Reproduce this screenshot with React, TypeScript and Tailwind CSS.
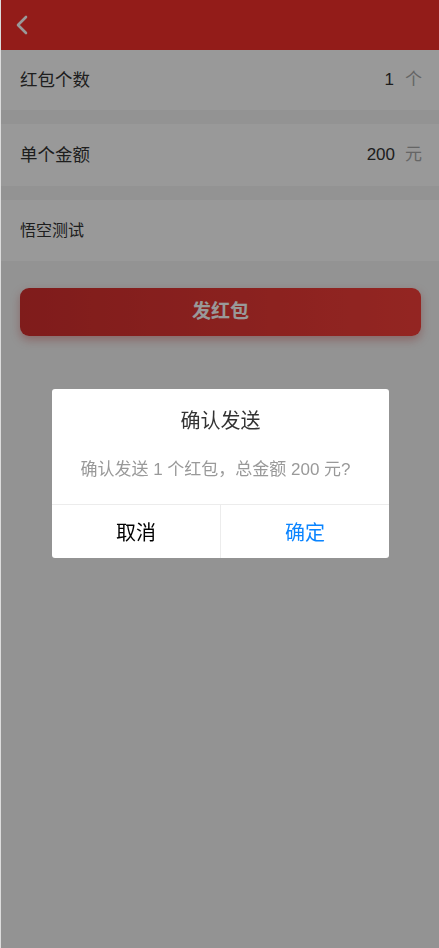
import React from "react";

export default function App() {
  return (
    <div
      className="relative min-h-[948px] w-full bg-[#f5f5f5] border-l border-[#dcdcdc]"
      style={{ fontFamily: '"Liberation Sans", "Noto Sans CJK SC", sans-serif' }}
    >
      <div className="h-[50px] bg-[#f52f2b] flex items-center pl-[14px]">
        <svg width="14" height="20" viewBox="0 0 14 20" fill="none">
          <path d="M11 2 L3 10 L11 18" stroke="#ffffff" strokeWidth="2.6" strokeLinecap="round" strokeLinejoin="round" />
        </svg>
      </div>

      <div className="h-[60px] bg-white flex items-center justify-between pl-[19px] pr-[17px]">
        <span className="text-[17.5px] text-[#333]">红包个数</span>
        <div className="flex items-center">
          <span className="text-[17px] text-[#333]">1</span>
          <span className="text-[17px] text-[#a8a8a8] ml-[11px]">个</span>
        </div>
      </div>

      <div className="h-[14px]" />

      <div className="h-[62px] bg-white flex items-center justify-between pl-[19px] pr-[17px]">
        <span className="text-[17.5px] text-[#333]">单个金额</span>
        <div className="flex items-center">
          <span className="text-[17px] text-[#333]">200</span>
          <span className="text-[17px] text-[#a8a8a8] ml-[10px]">元</span>
        </div>
      </div>

      <div className="h-[14px]" />

      <div className="h-[61px] bg-white flex items-center pl-[19px]">
        <span className="text-[16px] text-[#333]">悟空测试</span>
      </div>

      <div className="pl-[19px] pr-[18px] pt-[27px]">
        <button className="w-full h-[48px] rounded-[9px] bg-gradient-to-r from-[#d42f2e] to-[#f63f39] text-white text-[19px] font-bold shadow-[0_4px_10px_rgba(200,40,40,0.35)]">
          发红包
        </button>
      </div>

      <div className="fixed top-0 bottom-0 right-0 left-[1px] bg-black/40" />

      <div className="absolute left-[51px] top-[389px] w-[337px] bg-white rounded-[3px] overflow-hidden">
        <div className="pt-[18px] text-center text-[20px] text-[#333] leading-[28px]">确认发送</div>
        <div className="pt-[23px] pb-[22px] pr-[10px] text-center text-[17px] text-[#999] leading-[24px]">
          确认发送 1 个红包，总金额 200 元?
        </div>
        <div className="flex h-[54px] border-t border-[#ececec]">
          <div className="flex-1 flex items-center justify-center text-[20px] text-black border-r border-[#ececec] pt-[2px]">取消</div>
          <div className="flex-1 flex items-center justify-center text-[20px] text-[#0a84ff] pt-[2px]">确定</div>
        </div>
      </div>
    </div>
  );
}
